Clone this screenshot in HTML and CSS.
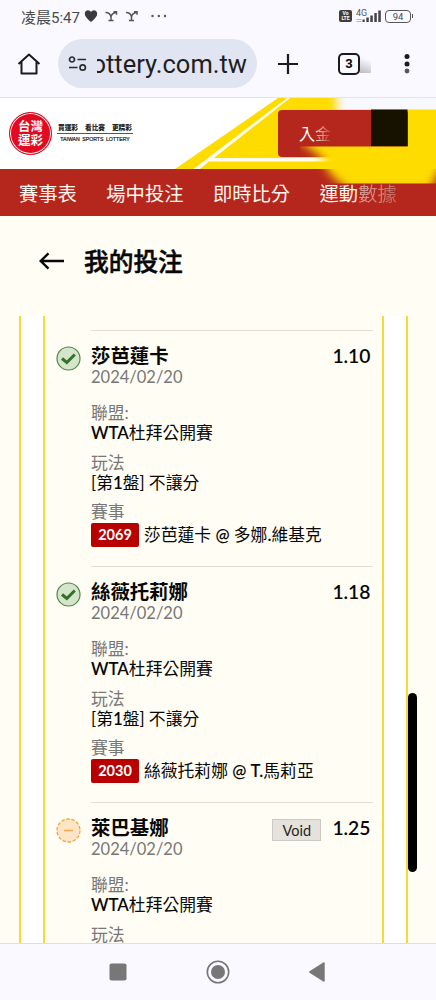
FILE: index.html
```
<!DOCTYPE html>
<html lang="zh-Hant">
<head>
    <meta charset="UTF-8">
    <meta name="viewport" content="width=device-width, initial-scale=1.0">
    <title>我的投注</title>
    <link rel="stylesheet" href="styles.css">
</head>
<body>
    <div class="status-bar">
        <span class="time">凌晨5:47</span>
        <svg class="notices" width="84" height="16" viewBox="0 0 84 16">
            <path d="M7 14C3 10.5 .8 8.400 .8 5.700 .8 3.500 2.300 2.200 4 2.200 5.300 2.200 6.300 2.900 7 4 7.700 2.900 8.700 2.200 10 2.200 11.700 2.200 13.200 3.500 13.200 5.700 13.200 8.400 11 10.500 7 14Z" fill="#3b3b3e"/>
            <g fill="none" stroke="#555558" stroke-width="1.500">
                <path d="M21.500 4.500c3.500 0 5 1.500 5.500 4.500v3.500M24.500 12.500h5M27 9c.3-3 2-4 5.200-4.800M29.500 3.700h3v3"/>
                <path d="M42 4.500c3.500 0 5 1.500 5.500 4.500v3.500M45 12.500h5M47.500 9c.3-3 2-4 5.200-4.800M50 3.700h3v3"/>
            </g>
            <g fill="#555558">
                <circle cx="68.500" cy="8" r="1.200"/>
                <circle cx="74.800" cy="8" r="1.200"/>
                <circle cx="81" cy="8" r="1.200"/>
            </g>
        </svg>
        <div class="signals">
            <span class="volte">Vo<br>LTE</span>
            <svg width="26" height="16" viewBox="0 0 26 16">
                <text x="0" y="8" font-family="Roboto, sans-serif" font-size="9" fill="#555558">4G</text>
                <path d="M.5 11.500h5M.5 13.500h5" stroke="#aaa" stroke-width=".8"/>
                <g fill="#444447">
                    <rect x="6.500" y="11.500" width="2.200" height="2.500"/>
                    <rect x="10.300" y="9.500" width="2.500" height="4.500"/>
                    <rect x="14.300" y="7.500" width="2.500" height="6.500"/>
                    <rect x="18.300" y="5" width="2.500" height="9"/>
                    <rect x="22.300" y="2.500" width="2.500" height="11.500"/>
                </g>
            </svg>
            <span class="battery">94</span>
        </div>
    </div>

    <div class="browser-bar">
        <svg class="home" width="24" height="24" viewBox="0 0 24 24" fill="none" stroke="#1b1b1f" stroke-width="2">
            <path d="M1.500 12 12 2.500 22.500 12M4.500 10v11.500h15V10" stroke-linejoin="round"/>
        </svg>
        <div class="address">
            <svg width="20" height="18" viewBox="0 0 20 18" fill="none" stroke="#2b2c31" stroke-width="1.700">
                <circle cx="4" cy="4.500" r="2.500"/>
                <path d="M9.500 4.500H18M1 12.500h8.500"/>
                <circle cx="14.700" cy="12.500" r="2.700"/>
            </svg>
            <div class="url"><span>ottery.com.tw</span></div>
        </div>
        <svg class="plus" width="20" height="20" viewBox="0 0 20 20" stroke="#1b1b1f" stroke-width="2.200">
            <path d="M0 10h20M10 0v20"/>
        </svg>
        <div class="tabs">3</div>
        <svg class="more" width="6" height="20" viewBox="0 0 6 20" fill="#1b1b1f">
            <circle cx="3" cy="2.600" r="2.500"/>
            <circle cx="3" cy="10" r="2.500"/>
            <circle cx="3" cy="17" r="2.400" fill="#57575b"/>
        </svg>
    </div>

    <header>
        <div class="banner">
            <svg class="banner-art" width="262" height="71" viewBox="0 0 262 71">
                <path d="M1 71 104 0h158v71Z" fill="#fedc00"/>
                <path d="M19.500 71 113 0h3L40 60h136v3.500H35L26 71Z" fill="#fffdf0"/>
            </svg>
            <div class="logo">
                <div class="seal">台灣<br>運彩</div>
                <div class="slogan">
                    <div class="slogan-zh"><span>買運彩</span><span>看比賽</span><span>更精彩</span></div>
                    <div class="slogan-en">TAIWAN SPORTS LOTTERY</div>
                </div>
            </div>
            <div class="deposit"><span>入</span><span class="fade">金</span></div>
        </div>
        <nav>
            <a>賽事表</a>
            <a>場中投注</a>
            <a>即時比分</a>
            <a>運動<span class="dim">數據</span></a>
        </nav>
        <svg class="cover" width="136" height="118" viewBox="0 0 136 118">
            <defs>
                <filter id="soft" x="-20%" y="-30%" width="140%" height="160%"><feGaussianBlur stdDeviation="5"/></filter>
                <clipPath id="top"><rect width="136" height="11.500"/></clipPath>
                <clipPath id="low"><rect y="48.500" width="136" height="37"/></clipPath>
            </defs>
            <g clip-path="url(#top)"><path d="M34-30H170V50H40Z" fill="#f8f8ff" filter="url(#soft)"/></g>
            <rect x="71" y="11.500" width="36.500" height="37" fill="#171100"/>
            <g clip-path="url(#low)"><path d="M-4 40 20 30H160V68H142L130 92H48L30 76 22 60Z" fill="#fedc00" filter="url(#soft)"/></g>
        </svg>
    </header>

    <div class="page-title">
        <svg width="26" height="18" viewBox="0 0 26 18" fill="none" stroke="#080808" stroke-width="2.400">
            <path d="M25 9H2M9.500 1.300 1.700 9l7.800 7.700"/>
        </svg>
        <h1>我的投注</h1>
    </div>

    <main>
        <div class="ticket">
            <div class="legs">
                <div class="leg">
                    <svg class="result" width="25" height="25" viewBox="0 0 25 25">
                        <circle cx="12.500" cy="12.500" r="11.500" fill="#d5e5cb" stroke="#4f8a46" stroke-width="1.200"/>
                        <path d="M6 12.500 10.800 16.500 18.800 8.500" fill="none" stroke="#2f7228" stroke-width="3"/>
                    </svg>
                    <div class="leg-body">
                        <div class="leg-head">
                            <h2>莎芭蓮卡</h2>
                            <span class="odds">1.10</span>
                        </div>
                        <div class="date">2024/02/20</div>
                        <dl>
                            <dt>聯盟:</dt>
                            <dd><b>WTA</b>杜拜公開賽</dd>
                            <dt>玩法</dt>
                            <dd>[第<b>1</b>盤] 不讓分</dd>
                            <dt>賽事</dt>
                            <dd class="match"><span class="code">2069</span>莎芭蓮卡 <b>@</b> 多娜<b>.</b>維基克</dd>
                        </dl>
                    </div>
                </div>
                <div class="leg">
                    <svg class="result" width="25" height="25" viewBox="0 0 25 25">
                        <circle cx="12.500" cy="12.500" r="11.500" fill="#d5e5cb" stroke="#4f8a46" stroke-width="1.200"/>
                        <path d="M6 12.500 10.800 16.500 18.800 8.500" fill="none" stroke="#2f7228" stroke-width="3"/>
                    </svg>
                    <div class="leg-body">
                        <div class="leg-head">
                            <h2>絲薇托莉娜</h2>
                            <span class="odds">1.18</span>
                        </div>
                        <div class="date">2024/02/20</div>
                        <dl>
                            <dt>聯盟:</dt>
                            <dd><b>WTA</b>杜拜公開賽</dd>
                            <dt>玩法</dt>
                            <dd>[第<b>1</b>盤] 不讓分</dd>
                            <dt>賽事</dt>
                            <dd class="match"><span class="code">2030</span>絲薇托莉娜 <b>@ T.</b>馬莉亞</dd>
                        </dl>
                    </div>
                </div>
                <div class="leg">
                    <svg class="result" width="25" height="25" viewBox="0 0 25 25">
                        <circle cx="12.500" cy="12.500" r="11.500" fill="#fde5c6" stroke="#f0a540" stroke-width="1.300" stroke-dasharray="3.500 1.660"/>
                        <path d="M8 12.500h9" stroke="#f2ab50" stroke-width="1.600"/>
                    </svg>
                    <div class="leg-body">
                        <div class="leg-head">
                            <h2>萊巴基娜</h2>
                            <span class="void">Void</span>
                            <span class="odds">1.25</span>
                        </div>
                        <div class="date">2024/02/20</div>
                        <dl>
                            <dt>聯盟:</dt>
                            <dd><b>WTA</b>杜拜公開賽</dd>
                            <dt>玩法</dt>
                        </dl>
                    </div>
                </div>
            </div>
        </div>
        <div class="scrollbar"></div>
    </main>

    <footer>
        <svg width="218" height="26" viewBox="0 0 218 26" fill="#777">
            <rect x=".5" y="4.500" width="17" height="17" rx="2"/>
            <circle cx="109" cy="13" r="10.700" fill="none" stroke="#777" stroke-width="1.600"/>
            <circle cx="109" cy="13" r="7"/>
            <path d="M200.500 12.200 214.300 3.400Q215.700 2.800 215.700 4.200V21.800Q215.700 23.200 214.300 22.600L200.500 13.800Q199.500 13 200.500 12.200Z"/>
        </svg>
    </footer>
</body>
</html>
```
FILE: styles.css
```
* {
    box-sizing: border-box;
}

body {
    margin: 0;
    height: 1000px;
    display: flex;
    flex-direction: column;
    overflow: hidden;
    background-color: #fffdf4;
    color: #080808;
    font-family: Lato, 'Noto Sans CJK TC', sans-serif;
}

/* Phone status bar */
.status-bar {
    height: 34px;
    padding: 0 24px 2px 21px;
    display: flex;
    align-items: center;
    background-color: #f9f9ff;
    color: #4a4a4d;
    font-family: Roboto, 'Noto Sans CJK TC', sans-serif;
}

.time {
    width: 63px;
    font-size: 15px;
    white-space: nowrap;
}

.signals {
    margin-left: auto;
    display: flex;
    align-items: center;
}

.volte {
    width: 13px;
    height: 12px;
    margin-right: 4px;
    padding-top: 1px;
    border-radius: 2px;
    background-color: #3e3e41;
    color: #fff;
    font-size: 5px;
    font-weight: bold;
    line-height: 5px;
    text-align: center;
}

.battery {
    position: relative;
    width: 26px;
    height: 13px;
    margin-left: 3px;
    margin-right: 1px;
    border: 1.5px solid #58585b;
    border-radius: 4px;
    font-size: 9.5px;
    line-height: 11px;
    text-align: center;
}

.battery::after {
    content: "";
    position: absolute;
    right: -3px;
    top: 3px;
    width: 1.5px;
    height: 4px;
    background-color: #58585b;
}

/* Browser toolbar */
.browser-bar {
    height: 64px;
    padding: 0 26px 4px 17px;
    display: flex;
    align-items: center;
    flex-shrink: 0;
    background-color: #f9f9ff;
    border-bottom: 1px solid #e3e3ea;
}

.address {
    width: 199px;
    height: 49px;
    margin-left: 17px;
    padding-left: 10px;
    display: flex;
    align-items: center;
    border-radius: 25px;
    background-color: #e1e5f1;
}

.url {
    width: 150px;
    height: 40px;
    margin-left: 9px;
    display: flex;
    justify-content: flex-end;
    overflow: hidden;
    font-family: Roboto, sans-serif;
    font-size: 25.5px;
    line-height: 41px;
    color: #1d1e22;
}

.plus {
    margin-left: 21px;
}

.tabs {
    position: relative;
    width: 22px;
    height: 22px;
    margin-left: 40px;
    border: 2px solid #1b1b1f;
    border-radius: 5px;
    font-family: Roboto, sans-serif;
    font-size: 13px;
    font-weight: bold;
    line-height: 18px;
    text-align: center;
}

.tabs::after {
    content: "";
    position: absolute;
    left: 20px;
    top: 0;
    width: 11px;
    height: 18px;
    background: linear-gradient(200deg, #f9f9ff 25%, #bcbcc0);
}

.more {
    margin-left: auto;
}

/* Site header */
header {
    position: relative;
    height: 118px;
    flex-shrink: 0;
}

.banner {
    position: relative;
    height: 71px;
    padding: 12px 28px 0 9px;
    display: flex;
    justify-content: space-between;
    background-color: #fff;
}

.banner-art {
    position: absolute;
    right: 0;
    top: 0;
}

.logo {
    display: flex;
    align-items: flex-start;
}

.seal {
    width: 43px;
    height: 43px;
    padding-top: 7px;
    border: 1px solid #e2001a;
    border-radius: 50%;
    box-shadow: inset 0 0 0 1px #fff;
    background-color: #e20a20;
    color: #fff;
    font-size: 12.5px;
    font-weight: bold;
    line-height: 13.5px;
    text-align: center;
    margin-top: 2px;
}

.slogan {
    width: 76px;
    margin: 13px 0 0 5px;
    color: #222;
}

.slogan-zh {
    height: 11px;
    padding: 0 1px;
    display: flex;
    justify-content: space-between;
    border-bottom: 1px solid #555;
    font-size: 6.7px;
    font-weight: 900;
    line-height: 9px;
}

.slogan-en {
    padding-top: 2px;
    font-family: 'Liberation Sans', sans-serif;
    font-size: 5.2px;
    line-height: 6px;
    text-align: center;
    white-space: nowrap;
    word-spacing: 1px;
    -webkit-text-stroke: 0.2px #222;
}

.deposit {
    position: relative;
    width: 130px;
    height: 47px;
    padding-left: 21px;
    border-radius: 4px;
    background-color: #b5271c;
    color: #fff;
    font-size: 16px;
    line-height: 48px;
}

.fade {
    background: linear-gradient(90deg, #f3d9d6, #bd4137);
    background-clip: text;
    -webkit-background-clip: text;
    color: transparent;
}

nav {
    height: 47px;
    padding-left: 19px;
    display: flex;
    gap: 29.5px;
    background-color: #b5271c;
    color: #fff5ef;
    font-size: 19.3px;
    line-height: 50px;
    white-space: nowrap;
}

.dim {
    background: linear-gradient(90deg, #d99e99, #c5685f);
    background-clip: text;
    -webkit-background-clip: text;
    color: transparent;
}

/* Soft patches over the account corner */
.cover {
    position: absolute;
    right: 0;
    top: 0;
}

/* Page title */
.page-title {
    height: 100px;
    padding: 0 0 10px 39px;
    display: flex;
    align-items: center;
    gap: 19px;
    flex-shrink: 0;
}

h1 {
    margin: 0 0 3px;
    font-size: 24.7px;
    font-weight: 500;
    font-family: 'Noto Sans CJK TC', sans-serif;
    -webkit-text-stroke: 0.5px #080808;
}

/* Bet slip */
main {
    position: relative;
    height: 627px;
    padding: 0 28px 0 19px;
    flex-shrink: 0;
    overflow: hidden;
}

.ticket {
    padding: 0 22px;
    border: solid #f9d83a;
    border-width: 0 2px;
    background-color: #fff;
}

.legs {
    height: 627px;
    padding: 14px 9px 0 11px;
    border: solid #f9d83a;
    border-width: 0 2px;
    background-color: #fffdf4;
}

.leg {
    height: 236px;
    display: flex;
}

.result {
    margin: 16px 10px 0 0;
    flex-shrink: 0;
}

.leg-body {
    flex: 1;
    padding-top: 12px;
    border-top: 1px solid #dedcd5;
}

.leg-head {
    height: 25px;
    padding-right: 2.5px;
    display: flex;
    align-items: center;
}

h2 {
    margin: 0 auto 0 0;
    font-size: 19.4px;
    line-height: 25px;
}

.odds {
    font-size: 19.3px;
    font-weight: 600;
}

.void {
    width: 49px;
    height: 22px;
    margin: 4px 11px 0 0;
    border: 1px solid #cbc9c4;
    background-color: #e5e2dc;
    color: #222;
    font-size: 14.5px;
    line-height: 21px;
    text-align: center;
}

.date {
    height: 18px;
    font-size: 16.5px;
    line-height: 19px;
    color: #777;
}

dl {
    margin: 17px 0 0;
    font-size: 16.8px;
    line-height: 20px;
    white-space: nowrap;
}

dt {
    height: 20px;
    color: #777;
}

dd {
    height: 20px;
    margin: 0 0 9.5px;
}

b {
    font-weight: 600;
}

.match {
    height: 24px;
    padding-top: 1px;
    line-height: 24px;
}

.code {
    display: inline-block;
    width: 48px;
    height: 24px;
    margin-right: 5px;
    border-radius: 2px;
    background-color: #b80000;
    color: #fff;
    font-size: 14.5px;
    font-weight: bold;
    line-height: 24px;
    text-align: center;
    vertical-align: top;
}

.scrollbar {
    position: absolute;
    right: 19px;
    top: 377px;
    width: 9px;
    height: 179px;
    border-radius: 5px;
    background-color: #000;
}

/* Android navigation */
footer {
    height: 57px;
    flex-shrink: 0;
    display: flex;
    align-items: center;
    justify-content: center;
    border-top: 1px solid #dedee4;
    background-color: #f9f9ff;
}
```
